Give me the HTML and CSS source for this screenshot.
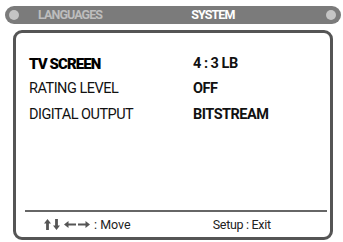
FILE: index.html
```html
<!DOCTYPE html>
<html>
<head>
<meta charset="utf-8">
<link rel="stylesheet" href="styles.css">
</head>
<body>
<div class="tabbar">
  <span class="dot"></span>
  <span class="tab tab-inactive">LANGUAGES</span>
  <span class="tab tab-active">SYSTEM</span>
  <span class="dot dot-right"></span>
</div>
<div class="panel">
  <div class="rows">
    <div class="label label-sel">TV SCREEN</div><div class="value">4 : 3 LB</div>
    <div class="label">RATING LEVEL</div><div class="value">OFF</div>
    <div class="label">DIGITAL OUTPUT</div><div class="value">BITSTREAM</div>
  </div>
  <div class="sep"></div>
  <div class="footer">
    <div class="hint hint-move">
      <svg class="arr" width="7" height="11" viewBox="0 0 7 11"><path d="M3.5 0 L7 4.5 L4.9 4.5 L4.9 11 L2.1 11 L2.1 4.5 L0 4.5 Z" fill="#555"/></svg>
      <svg class="arr" width="7" height="11" viewBox="0 0 7 11"><path d="M3.5 11 L7 6.5 L4.9 6.5 L4.9 0 L2.1 0 L2.1 6.5 L0 6.5 Z" fill="#555"/></svg>
      <svg class="arr arr-h" width="12" height="7" viewBox="0 0 12 7"><path d="M0 3.5 L4.5 0 L4.5 2.4 L12 2.4 L12 4.6 L4.5 4.6 L4.5 7 Z" fill="#555"/></svg>
      <svg class="arr" width="12" height="7" viewBox="0 0 12 7"><path d="M12 3.5 L7.5 0 L7.5 2.4 L0 2.4 L0 4.6 L7.5 4.6 L7.5 7 Z" fill="#555"/></svg>
      <span>: Move</span>
    </div>
    <div class="hint hint-exit">Setup : Exit</div>
  </div>
</div>
</body>
</html>
```
FILE: styles.css
```css
html, body {
  margin: 0;
  padding: 0;
  background: #ffffff;
}
body {
  width: 343px;
  height: 242px;
  overflow: hidden;
  font-family: Roboto, "Liberation Sans", sans-serif;
}
.tabbar {
  margin: 6px 2px 0 5px;
  height: 18px;
  border-radius: 9px;
  background: #7b7b7b;
  display: flex;
  align-items: center;
  padding: 0 5px 0 4px;
}
.dot {
  width: 10px;
  height: 10px;
  border-radius: 50%;
  background: #c4c4c4;
  flex: none;
}
.dot-right {
  margin-left: auto;
}
.tab {
  font-weight: bold;
  font-size: 12.5px;
  line-height: 18px;
  letter-spacing: -0.9px;
}
.tab-inactive {
  color: #bdbdbd;
  margin-left: 19px;
}
.tab-active {
  color: #ffffff;
  margin-left: 89px;
}
.panel {
  margin: 6px 0 0 13px;
  width: 320px;
  height: 210px;
  box-sizing: border-box;
  border: 3px solid #555555;
  border-radius: 9px;
  display: flex;
  flex-direction: column;
}
.rows {
  display: grid;
  grid-template-columns: 164px auto;
  grid-auto-rows: 25.3px;
  align-items: center;
  padding: 18px 0 0 13px;
  flex: 1;
  align-content: start;
}
.label {
  font-size: 14.5px;
  color: #111111;
  letter-spacing: -0.5px;
}
.label-sel {
  font-weight: 900;
  color: #000000;
  font-size: 15px;
  letter-spacing: -0.9px;
}
.value {
  font-size: 14.5px;
  font-weight: bold;
  color: #111111;
  letter-spacing: -0.5px;
}
.sep {
  height: 2px;
  background: #666666;
  margin: 0 3px 0 9px;
}
.footer {
  height: 25px;
  display: flex;
  align-items: center;
  font-size: 12.5px;
  color: #222222;
}
.hint-move {
  display: flex;
  align-items: center;
  gap: 2px;
  margin-left: 28px;
}
.arr-h {
  margin-left: 2px;
}
.hint-move span {
  margin-left: 2px;
}
.hint-exit {
  margin-left: 82px;
  letter-spacing: -0.3px;
}
```
